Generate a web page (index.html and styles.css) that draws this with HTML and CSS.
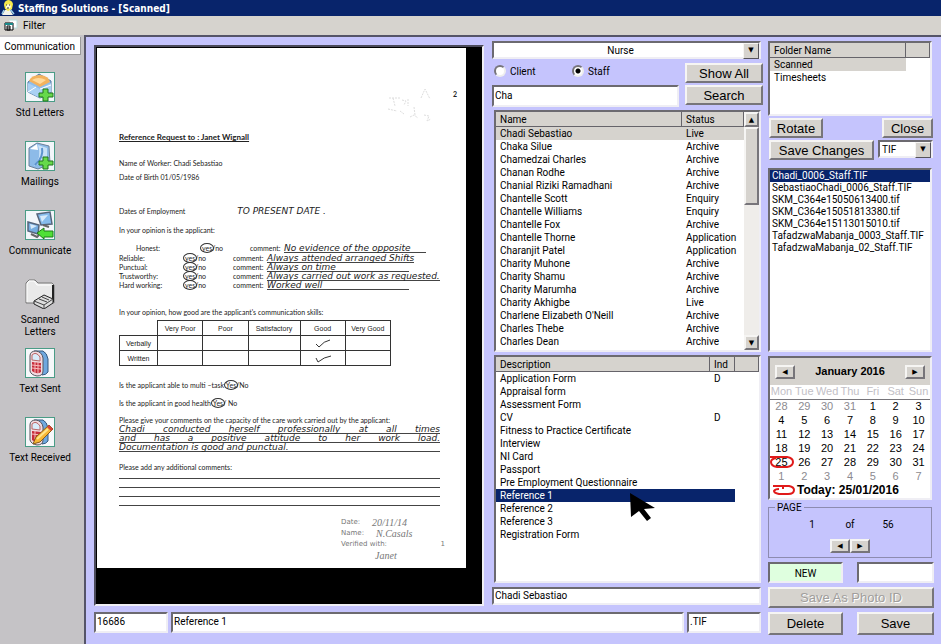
FILE: index.html
```html
<!DOCTYPE html>
<html lang="en">

<head>
    <meta charset="UTF-8">
    <meta name="viewport" content="width=device-width, initial-scale=1.0">
    <title>Staffing Solutions - [Scanned]</title>
    <link rel="stylesheet" href="styles.css">
</head>

<body>
    <header class="titlebar">
        <svg class="title-icon" viewBox="0 0 16 16" aria-hidden="true">
            <path d="M2 15l3-5h5l3 5z" fill="#f4f4ea" />
            <path d="M10 9l4 5M4 10l-2 4" stroke="#9fd0e8" stroke-width="1.5" />
            <path d="M4 5q0-4 4-5 4 0 5 4l-1 5-4 2-3-2z" fill="#f6e84a" />
            <path d="M6 5l4-1 1 3-2 2-3-1z" fill="#fffbd8" />
            <path d="M6 5h1M9 5h1M7 8h2" stroke="#333" />
        </svg>
        <span>Staffing Solutions - [Scanned]</span>
    </header>
    <nav class="menubar">
        <svg class="menu-icon" viewBox="0 0 14 14" aria-hidden="true">
            <path d="M5 1h8v8h-4" fill="#fff" stroke="#b9dede" />
            <path d="M1 4h8v7H1z" fill="#fff" stroke="#000" />
            <path d="M1 4h8v2H1z" fill="#1b8a8a" />
            <path d="M3 7h3v4H3zM3 9h3" fill="none" stroke="#000" />
        </svg>
        <a href="#filter">Filter</a>
    </nav>

    <div class="workspace">
        <aside class="sidebar">
            <h2 class="sidebar-tab">Communication</h2>
            <nav class="shortcuts">
                <a class="shortcut" href="#std-letters">
                    <svg viewBox="0 0 30 30" aria-hidden="true">
                        <rect x=".5" y=".5" width="29" height="29" fill="#f2f6fa" stroke="#4a9c86" />
                        <path d="M3 10L14 2l12 7v12l-11 5L3 20z" fill="#8fbdea" stroke="#52779f" />
                        <path d="M4 9q2-6 11-6 9 1 10 7l-10 5z" fill="#f3b25d" />
                        <path d="M7 8q6-4 14 0l-6 4z" fill="#ffd99a" />
                        <path d="M3 11l12 6 11-6v9l-11 6-12-6z" fill="#a9d0f3" />
                        <path d="M3 20l8-5M26 13l-11 4" stroke="#fff" fill="none" />
                        <path d="M18 17h5v4h5v4h-5v4h-5v-4h-4v-4h4z" fill="#66d94b" stroke="#20751d" />
                    </svg>
                    <span>Std Letters</span>
                </a>
                <a class="shortcut" href="#mailings">
                    <svg viewBox="0 0 30 30" aria-hidden="true">
                        <rect x=".5" y=".5" width="29" height="29" fill="#f2f6fa" stroke="#4a9c86" />
                        <path d="M4 7l8-5 12 3 1 18-12 5-9-3z" fill="#8dbbe8" stroke="#6b8098" />
                        <path d="M5 8l7-5 1 6z" fill="#fff" />
                        <path d="M13 4l9 3v12L9 25q8-8 4-21" fill="#c9e2f8" />
                        <path d="M17 7q2 9-7 17" stroke="#5c93ce" fill="none" stroke-width="2" />
                        <path d="M18 16h5v4h5v4h-5v4h-5v-4h-4v-4h4z" fill="#66d94b" stroke="#20751d" />
                    </svg>
                    <span>Mailings</span>
                </a>
                <a class="shortcut" href="#communicate">
                    <svg viewBox="0 0 30 30" aria-hidden="true">
                        <rect x=".5" y=".5" width="29" height="29" fill="#f2f6fa" stroke="#4a9c86" />
                        <path d="M12 4l13-2 2 12-11 1z" fill="#86bcec" stroke="#56657b" stroke-width="1.5" />
                        <path d="M3 12l11 3-1 9-10-3z" fill="#75ade0" stroke="#56657b" stroke-width="1.5" />
                        <path d="M15 6l8-1-6 7zM5 14l7 2-6 3z" fill="#d7ebfb" />
                        <path d="M18 15l6 2M6 24l6 3 2-2" stroke="#666" stroke-width="2" fill="none" />
                        <path d="M12 23l7-5v3h9v6h-9v2z" fill="#4fe036" stroke="#1d7a18" />
                    </svg>
                    <span>Communicate</span>
                </a>
                <a class="shortcut" href="#scanned-letters">
                    <svg viewBox="0 0 30 30" aria-hidden="true">
                        <path d="M1 24V4l3-3h6l3 3h14l2 2v18z" fill="#e9e9e9" stroke="#777" />
                        <path d="M2 23V5l2-3h5l3 4h14" stroke="#fff" fill="none" />
                        <path d="M28 6v17" stroke="#222" stroke-width="2" />
                        <path d="M9 22l10-6 9 4v4l-9 6-10-5z" fill="#ddd" stroke="#222" />
                        <path d="M9 22l10 4 9-6M19 26v4M14 20l8 3M17 18l7 3" stroke="#444" fill="none" />
                    </svg>
                    <span>Scanned Letters</span>
                </a>
                <a class="shortcut" href="#text-sent">
                    <svg viewBox="0 0 30 30" aria-hidden="true">
                        <rect x=".5" y=".5" width="29" height="29" fill="#f6f8fa" stroke="#4a9c86" />
                        <path d="M9 3h9q4 2 5 8v13q-2 3-6 3z" fill="#6fa8de" stroke="#35587f" />
                        <path d="M5 8q0-5 6-5 6 1 7 7v13q0 5-6 5-6-1-7-5z" fill="#f1dbe0" stroke="#54565f" />
                        <path d="M7 7q4-4 8 2v4l-8-1z" fill="#d9edfb" stroke="#b66" />
                        <path d="M7 14l9 1v9q-4 3-9-1z" fill="#c72d3c" />
                        <path d="M7 17l9 1M7 20l9 1M10 14v11M13 14v11" stroke="#f7bcbc" />
                    </svg>
                    <span>Text Sent</span>
                </a>
                <a class="shortcut" href="#text-received">
                    <svg viewBox="0 0 30 30" aria-hidden="true">
                        <rect x=".5" y=".5" width="29" height="29" fill="#f6f8fa" stroke="#4a9c86" />
                        <path d="M9 3h9q4 2 5 8v13q-2 3-6 3z" fill="#6fa8de" stroke="#35587f" />
                        <path d="M5 8q0-5 6-5 6 1 7 7v13q0 5-6 5-6-1-7-5z" fill="#f1dbe0" stroke="#54565f" />
                        <path d="M7 7q4-4 8 2v4l-8-1z" fill="#d9edfb" stroke="#b66" />
                        <path d="M7 14l9 1v9q-4 3-9-1z" fill="#c72d3c" />
                        <path d="M7 17l9 1M10 14v8" stroke="#f7bcbc" />
                        <path d="M8 27l3-7L24 8l4 4-13 13z" fill="#f7b836" stroke="#8a5a17" />
                        <path d="M22 10l2-2 4 4-2 2z" fill="#d3413a" />
                        <path d="M12 22l11-10" stroke="#ffe58c" stroke-width="2" />
                    </svg>
                    <span>Text Received</span>
                </a>
            </nav>
        </aside>

        <main class="main">
            <div class="browse">
                <div class="browse-top">
                    <section class="viewer" aria-label="Scanned document">
                        <article class="page">
                            <svg class="smudge" viewBox="0 0 60 44" aria-hidden="true">
                                <path d="M9 14h12M13 14l2 8M22 16l4 1-2 4M28 15v7M41 14l4-9 5 10M8 25l9 2M20 27l4 3M34 23l1 8M30 33l4-2 4 3M44 31l5 1-2 5 4-2" />
                            </svg>
                            <p class="page-mark">2</p>
                            <h1 class="doc-title">Reference Request to : Janet Wignall</h1>
                            <p class="doc-worker">Name of Worker: Chadi Sebastiao</p>
                            <p class="doc-birth">Date of Birth 01/05/1986</p>
                            <p class="doc-dates"><span>Dates of Employment</span><span class="hand">TO PRESENT DATE .</span></p>
                            <p class="doc-opinion">In your opinion is the applicant:</p>
                            <div class="traits">
                                <div class="trait trait-first">
                                    <span>Honest:</span><span><span class="ring">yes</span>/no</span><span>comment:</span>
                                    <span class="hand answer long">No evidence of the opposite</span>
                                </div>
                                <div class="trait">
                                    <span>Reliable:</span><span><span class="ring">yes</span>/no</span><span>comment:</span>
                                    <span class="hand answer long">Always attended arranged Shifts</span>
                                </div>
                                <div class="trait">
                                    <span>Punctual:</span><span><span class="ring">yes</span>/no</span><span>comment:</span>
                                    <span class="hand answer">Always on time</span>
                                </div>
                                <div class="trait">
                                    <span>Trustworthy:</span><span><span class="ring">yes</span>/no</span><span>comment:</span>
                                    <span class="hand answer long">Always carried out work as requested.</span>
                                </div>
                                <div class="trait">
                                    <span>Hard working:</span><span><span class="ring">yes</span>/no</span><span>comment:</span>
                                    <span class="hand answer">Worked well</span>
                                </div>
                            </div>
                            <p class="doc-skills">In your opinion, how good are the applicant's communication skills:</p>
                            <table class="skills">
                                <tr>
                                    <td class="blank"></td>
                                    <th>Very Poor</th>
                                    <th>Poor</th>
                                    <th>Satisfactory</th>
                                    <th>Good</th>
                                    <th>Very Good</th>
                                </tr>
                                <tr>
                                    <th>Verbally</th>
                                    <td></td>
                                    <td></td>
                                    <td></td>
                                    <td><svg class="tick" viewBox="0 0 18 9" aria-label="ticked"><path d="M2 5l3 3q5-6 11-7" /></svg></td>
                                    <td></td>
                                </tr>
                                <tr>
                                    <th>Written</th>
                                    <td></td>
                                    <td></td>
                                    <td></td>
                                    <td><svg class="tick" viewBox="0 0 18 9" aria-label="ticked"><path d="M2 4l2 4q6-5 13-6" /></svg></td>
                                    <td></td>
                                </tr>
                            </table>
                            <p class="doc-task">Is the applicant able to multi –task <span class="ring">Yes</span>/No</p>
                            <p class="doc-health">Is the applicant in good health <span class="ring">Yes</span>/ No</p>
                            <p class="doc-comments">Please give your comments on the capacity of the care work carried out by the applicant:</p>
                            <div class="written">
                                <p class="hand full">Chadi conducted herself professionally at all times</p>
                                <p class="hand full">and has a positive attitude to her work load.</p>
                                <p class="hand"><span>Documentation is good and punctual.</span></p>
                            </div>
                            <p class="doc-extra">Please add any additional comments:</p>
                            <div class="ruled"><i></i><i></i><i></i><i></i></div>
                            <div class="signoff">
                                <p><span>Date:</span><span class="sign">20/11/14</span></p>
                                <p><span>Name:</span><span class="sign">N.Casals</span></p>
                                <p><span>Verified with:</span><span class="page-no">1</span></p>
                                <p class="sign last">Janet</p>
                            </div>
                        </article>
                    </section>

                    <section class="people">
                        <div class="combo combo-wide">
                            <select aria-label="Staff type">
                                <option>Nurse</option>
                            </select>
                        </div>
                        <div class="finder">
                            <div class="kinds">
                                <label><input type="radio" name="kind"> Client</label>
                                <label><input type="radio" name="kind" checked> Staff</label>
                            </div>
                            <button type="button" class="btn">Show All</button>
                            <input type="text" class="field" value="Cha" aria-label="Search name">
                            <button type="button" class="btn">Search</button>
                        </div>
                        <div class="list names">
                            <div class="list-body">
                                <table class="grid">
                                    <colgroup><col><col class="col-status"></colgroup>
                                    <thead>
                                        <tr><th>Name</th><th>Status</th></tr>
                                    </thead>
                                    <tbody>
                                        <tr class="current"><td>Chadi Sebastiao</td><td>Live</td></tr>
                                        <tr><td>Chaka Silue</td><td>Archive</td></tr>
                                        <tr><td>Chamedzai Charles</td><td>Archive</td></tr>
                                        <tr><td>Chanan Rodhe</td><td>Archive</td></tr>
                                        <tr><td>Chanial Riziki Ramadhani</td><td>Archive</td></tr>
                                        <tr><td>Chantelle Scott</td><td>Enquiry</td></tr>
                                        <tr><td>Chantelle Williams</td><td>Enquiry</td></tr>
                                        <tr><td>Chantelle Fox</td><td>Archive</td></tr>
                                        <tr><td>Chantelle Thorne</td><td>Application</td></tr>
                                        <tr><td>Charanjit Patel</td><td>Application</td></tr>
                                        <tr><td>Charity Muhone</td><td>Archive</td></tr>
                                        <tr><td>Charity Shamu</td><td>Archive</td></tr>
                                        <tr><td>Charity Marumha</td><td>Archive</td></tr>
                                        <tr><td>Charity Akhigbe</td><td>Live</td></tr>
                                        <tr><td>Charlene Elizabeth O'Neill</td><td>Archive</td></tr>
                                        <tr><td>Charles Thebe</td><td>Archive</td></tr>
                                        <tr><td>Charles Dean</td><td>Archive</td></tr>
                                        <tr><td>Charles Gibbs</td><td>Archive</td></tr>
                                    </tbody>
                                </table>
                            </div>
                            <div class="scrollbar">
                                <button type="button" class="mini" aria-label="Scroll up">▲</button>
                                <div class="thumb"></div>
                                <button type="button" class="mini" aria-label="Scroll down">▼</button>
                            </div>
                        </div>
                        <div class="list files">
                            <table class="grid">
                                <colgroup><col><col class="col-ind"><col class="col-rest"></colgroup>
                                <thead>
                                    <tr><th>Description</th><th>Ind</th><th></th></tr>
                                </thead>
                                <tbody>
                                    <tr><td>Application Form</td><td>D</td></tr>
                                    <tr><td>Appraisal form</td><td></td></tr>
                                    <tr><td>Assessment Form</td><td></td></tr>
                                    <tr><td>CV</td><td>D</td></tr>
                                    <tr><td>Fitness to Practice Certificate</td><td></td></tr>
                                    <tr><td>Interview</td><td></td></tr>
                                    <tr><td>NI Card</td><td></td></tr>
                                    <tr><td>Passport</td><td></td></tr>
                                    <tr><td>Pre Employment Questionnaire</td><td></td></tr>
                                    <tr class="selected"><td>Reference 1</td><td></td></tr>
                                    <tr><td>Reference 2</td><td></td></tr>
                                    <tr><td>Reference 3</td><td></td></tr>
                                    <tr><td>Registration Form</td><td></td></tr>
                                </tbody>
                            </table>
                            <svg class="pointer" viewBox="0 0 26 28" aria-hidden="true">
                                <path d="M0 0l25 15-11 1 7 9-4 3-8-10-8 6z" />
                            </svg>
                        </div>
                        <input type="text" class="field field-name" value="Chadi Sebastiao" aria-label="Selected name">
                    </section>
                </div>
                <div class="record">
                    <input type="text" class="field" value="16686" aria-label="Record number">
                    <input type="text" class="field" value="Reference 1" aria-label="Description">
                    <input type="text" class="field" value=".TIF" aria-label="File type">
                </div>
            </div>

            <section class="tools">
                <div class="list folders">
                    <table class="grid">
                        <colgroup><col><col class="col-rest"></colgroup>
                        <thead>
                            <tr><th>Folder Name</th><th></th></tr>
                        </thead>
                        <tbody>
                            <tr class="current"><td>Scanned</td></tr>
                            <tr><td>Timesheets</td></tr>
                        </tbody>
                    </table>
                </div>
                <div class="row">
                    <button type="button" class="btn btn-rotate">Rotate</button>
                    <button type="button" class="btn btn-close">Close</button>
                </div>
                <div class="row">
                    <button type="button" class="btn btn-changes">Save Changes</button>
                    <div class="combo combo-type">
                        <select aria-label="Save type">
                            <option>TIF</option>
                        </select>
                    </div>
                </div>
                <ul class="list scans">
                    <li class="selected">Chadi_0006_Staff.TIF</li>
                    <li>SebastiaoChadi_0006_Staff.TIF</li>
                    <li>SKM_C364e15050613400.tif</li>
                    <li>SKM_C364e15051813380.tif</li>
                    <li>SKM_C364e15113015010.tif</li>
                    <li>TafadzwaMabanja_0003_Staff.TIF</li>
                    <li>TafadzwaMabanja_02_Staff.TIF</li>
                </ul>
                <div class="list calendar">
                    <div class="month">
                        <button type="button" class="mini" aria-label="Previous month">◀</button>
                        <strong>January 2016</strong>
                        <button type="button" class="mini" aria-label="Next month">▶</button>
                    </div>
                    <table class="days">
                        <thead>
                            <tr><th>Mon</th><th>Tue</th><th>Wed</th><th>Thu</th><th>Fri</th><th>Sat</th><th>Sun</th></tr>
                        </thead>
                        <tbody>
                            <tr><td class="off">28</td><td class="off">29</td><td class="off">30</td><td class="off">31</td><td>1</td><td>2</td><td>3</td></tr>
                            <tr><td>4</td><td>5</td><td>6</td><td>7</td><td>8</td><td>9</td><td>10</td></tr>
                            <tr><td>11</td><td>12</td><td>13</td><td>14</td><td>15</td><td>16</td><td>17</td></tr>
                            <tr><td>18</td><td>19</td><td>20</td><td>21</td><td>22</td><td>23</td><td>24</td></tr>
                            <tr>
                                <td class="today">25<svg class="loop" viewBox="0 0 24 14" aria-hidden="true"><path d="M0 2h17q6 1 6 5t-6 5H7q-6-1-6-5 0-3 5-4" /></svg></td>
                                <td>26</td><td>27</td><td>28</td><td>29</td><td>30</td><td>31</td>
                            </tr>
                            <tr><td class="off">1</td><td class="off">2</td><td class="off">3</td><td class="off">4</td><td class="off">5</td><td class="off">6</td><td class="off">7</td></tr>
                        </tbody>
                    </table>
                    <p class="today-line">
                        <svg viewBox="0 0 24 14" aria-hidden="true"><path d="M1 3h10v3M11 3h6q5 1 5 4 0 4-6 4H7q-5-1-5-3 1-2 5-2" /></svg>
                        <strong>Today: 25/01/2016</strong>
                    </p>
                </div>
                <fieldset class="pager">
                    <legend>PAGE</legend>
                    <p><span>1</span><span>of</span><span>56</span></p>
                    <div class="pager-buttons">
                        <button type="button" class="mini" aria-label="Previous page">◀</button>
                        <button type="button" class="mini" aria-label="Next page">▶</button>
                    </div>
                </fieldset>
                <div class="pair">
                    <input type="text" class="field field-new" value="NEW" aria-label="Record state">
                    <input type="text" class="field" aria-label="Note">
                </div>
                <button type="button" class="btn btn-photo" disabled>Save As Photo ID</button>
                <div class="pair pair-last">
                    <button type="button" class="btn">Delete</button>
                    <button type="button" class="btn">Save</button>
                </div>
            </section>
        </main>
    </div>
</body>

</html>
```

FILE: styles.css
```css
* {
    box-sizing: border-box;
}

body {
    margin: 0;
    min-height: 100vh;
    display: flex;
    flex-direction: column;
    background-color: #c5c4fd;
    color: #000;
    font-family: Roboto, "Liberation Sans", Arial, sans-serif;
    font-size: 10px;
    line-height: 13px;
}

button,
input,
select {
    font: inherit;
    color: inherit;
}

p,
h1,
h2,
ul {
    margin: 0;
    padding: 0;
}

a {
    color: inherit;
    text-decoration: none;
}

/* Title and menu */
.titlebar {
    display: flex;
    align-items: center;
    gap: 2px;
    height: 16px;
    background-color: #08246b;
    color: #fff;
    font-family: "DejaVu Sans Condensed", "DejaVu Sans", sans-serif;
    font-size: 10px;
    font-weight: bold;
}

.title-icon {
    width: 16px;
    height: 16px;
}

.menubar {
    display: flex;
    align-items: center;
    gap: 5px;
    height: 19px;
    padding-left: 4px;
    background-color: #d6d3ce;
}

.menu-icon {
    width: 14px;
    height: 14px;
}

.workspace {
    flex: 1;
    display: flex;
}

/* Sidebar */
.sidebar {
    width: 84px;
    flex-shrink: 0;
    background-color: #c5c3c6;
}

.sidebar-tab {
    margin: 2px 3px 0 0;
    padding: 3px 5px 2px 0;
    height: 18px;
    background-color: #fff;
    border-right: 1px solid #999;
    border-bottom: 1px solid #999;
    font-size: 10px;
    font-weight: normal;
    text-align: right;
}

.shortcuts {
    display: grid;
    grid-auto-rows: 69px;
    padding: 17px 9px 0 5px;
}

.shortcut {
    display: flex;
    flex-direction: column;
    align-items: center;
    gap: 5px;
    line-height: 12px;
    text-align: center;
}

.shortcut svg {
    width: 30px;
    height: 30px;
    flex-shrink: 0;
}

.shortcut span {
    max-width: 70px;
}

.shortcut:nth-child(4) span {
    max-width: 50px;
}

/* Main area */
.main {
    flex: 1;
    min-width: 0;
    display: flex;
    gap: 5px;
    padding: 4px 7px 9px 8px;
    border-top: 2px solid #555468;
    border-left: 2px solid #555468;
}

.browse {
    flex: 1;
    min-width: 0;
    display: flex;
    flex-direction: column;
    gap: 6px;
    padding-bottom: 2px;
}

.browse-top {
    flex: 1;
    display: flex;
    gap: 8px;
}

.field,
.list,
.combo {
    background-color: #fff;
    border: 2px solid;
    border-color: #6c6a70 #efeef4 #efeef4 #6c6a70;
}

.field {
    width: 100%;
    min-width: 0;
    height: 21px;
    padding: 0 1px 2px;
    border-radius: 0;
}

.btn,
.mini {
    padding: 0;
    background-color: #d6d3ce;
    border: 2px solid;
    border-color: #f6f5f3 #77757a #77757a #f6f5f3;
    border-radius: 0;
}

.btn {
    height: 20px;
    font-family: "Liberation Sans", Arial, sans-serif;
    font-size: 13px;
}

.btn:active,
.mini:active {
    border-color: #77757a #f6f5f3 #f6f5f3 #77757a;
}

.btn:disabled {
    color: #a09e9c;
    text-shadow: 1px 1px 0 #fff;
}

.mini {
    width: 20px;
    height: 14px;
    font-family: "DejaVu Sans", sans-serif;
    font-size: 7px;
    line-height: 8px;
}

/* Scanned document */
.viewer {
    flex: 1;
    min-width: 0;
    margin-top: 4px;
    padding: 1px 16px 36px 1px;
    background-color: #000;
    border: 2px solid;
    border-color: #4c4b5c #efeef4 #efeef4 #4c4b5c;
}

.page {
    position: relative;
    min-height: 520px;
    padding: 42px 9px 6px 22px;
    background-color: #fff;
    color: #222;
    font-family: Lato, "Open Sans", sans-serif;
    font-size: 7px;
    line-height: 9px;
}

.smudge {
    position: absolute;
    top: 36px;
    right: 26px;
    width: 60px;
    height: 44px;
    fill: none;
    stroke: #ddd;
    stroke-dasharray: 2 1;
}

.page-mark {
    text-align: right;
    font-weight: bold;
}

.hand {
    font-family: "DejaVu Sans", sans-serif;
    font-style: italic;
    font-size: 9px;
}

.doc-title {
    margin-top: 34px;
    font-size: 8px;
    font-weight: bold;
    text-decoration: underline;
}

.doc-worker {
    margin-top: 17px;
}

.doc-birth {
    margin-top: 5px;
}

.doc-dates {
    display: flex;
    gap: 52px;
    margin-top: 25px;
}

.doc-opinion {
    margin-top: 10px;
}

.traits {
    margin-top: 9px;
}

.trait {
    display: grid;
    grid-template-columns: 66px 48px 34px 142px;
    height: 9px;
    white-space: nowrap;
}

.trait-first {
    height: 10px;
    padding-left: 17px;
}

.answer {
    height: 9px;
    border-bottom: 1px solid #444;
    line-height: 9px;
}

.trait .long {
    min-width: max-content;
}

.ring {
    margin: 0 -2px;
    padding: 0 1px;
    border: 1px solid #333;
    border-radius: 50%;
}

.doc-skills {
    margin-top: 18px;
}

.skills {
    width: 272px;
    margin-top: 3px;
    border-collapse: collapse;
    table-layout: fixed;
    font-family: "Liberation Sans", Arial, sans-serif;
}

.skills th,
.skills td {
    height: 15px;
    padding: 0;
    border: 1px solid #333;
    font-weight: normal;
    line-height: 9px;
}

.skills .blank {
    width: 38px;
    border-top: 0;
    border-left: 0;
}

.skills th:nth-child(4) {
    width: 52px;
}

.tick {
    display: block;
    width: 18px;
    height: 9px;
    margin: 0 auto;
    fill: none;
    stroke: #333;
}

.doc-task {
    margin-top: 15px;
}

.doc-health {
    margin-top: 9px;
}

.doc-comments {
    margin-top: 8px;
}

.written p {
    width: 321px;
    height: 9px;
    border-bottom: 1px solid #444;
    line-height: 9px;
    white-space: nowrap;
}

.written .full {
    text-align-last: justify;
}

.doc-extra {
    margin-top: 11px;
}

.ruled {
    margin-top: 6px;
}

.ruled i {
    display: block;
    width: 321px;
    height: 9px;
    border-top: 1px solid #444;
}

.signoff {
    width: 104px;
    margin: 3px 0 0 222px;
    color: #777;
    font-family: "DejaVu Sans", sans-serif;
    line-height: 11px;
}

.signoff p {
    display: flex;
    gap: 12px;
    height: 11px;
}

.sign {
    font-family: "Liberation Serif", serif;
    font-style: italic;
    font-size: 10px;
}

.page-no {
    margin-left: auto;
}

.signoff .last {
    padding-left: 34px;
}

/* Lists */
.grid {
    width: 100%;
    border-collapse: separate;
    border-spacing: 0;
    table-layout: fixed;
}

.grid th {
    height: 15px;
    padding: 0 4px;
    background-color: #d6d3ce;
    border-right: 1px solid #66646a;
    border-bottom: 1px solid #66646a;
    font-weight: normal;
    text-align: left;
}

.grid td {
    height: 13px;
    padding: 0 4px;
    white-space: nowrap;
}

.current td {
    background-color: #d6d3ce;
}

.selected,
.selected td {
    background-color: #08246b;
    color: #fff;
}

.list {
    position: relative;
}

/* People column */
.people {
    width: 271px;
    flex-shrink: 0;
    display: flex;
    flex-direction: column;
    padding-bottom: 1px;
}

.combo {
    position: relative;
    height: 18px;
}

.combo::after {
    content: "▼";
    position: absolute;
    top: 0;
    right: 0;
    width: 14px;
    height: 14px;
    background-color: #d6d3ce;
    border: 1px solid;
    border-color: #f6f5f3 #55535a #55535a #f6f5f3;
    font-family: "DejaVu Sans", sans-serif;
    font-size: 7px;
    line-height: 12px;
    text-align: center;
    pointer-events: none;
}

.combo select {
    display: block;
    width: 100%;
    height: 14px;
    padding: 0 14px 0 2px;
    appearance: none;
    background: none;
    border: 0;
}

.combo-wide {
    margin-right: 2px;
}

.combo-wide select {
    text-align-last: center;
}

.finder {
    display: grid;
    grid-template-columns: 1fr 78px;
    gap: 2px 6px;
    margin: 4px 0 3px;
}

.finder .field {
    height: 22px;
}

.kinds {
    display: grid;
    grid-template-columns: 78px 1fr;
    align-items: start;
    padding: 1px 0 0 2px;
}

.kinds label {
    display: flex;
    align-items: center;
    gap: 4px;
    height: 14px;
}

.kinds input {
    appearance: none;
    width: 12px;
    height: 12px;
    margin: 0;
    background-color: #fff;
    border: 2px solid;
    border-color: #77757a #eee #eee #77757a;
    border-radius: 50%;
}

.kinds input:checked {
    background-image: radial-gradient(circle, #000 2px, #fff 3px);
}

.names {
    display: flex;
    height: 242px;
    margin: 0 2px 3px;
}

.list-body {
    flex: 1;
    overflow: hidden;
}

.col-status {
    width: 62px;
}

.scrollbar {
    width: 15px;
    display: flex;
    flex-direction: column;
    background-color: #efedea;
}

.scrollbar .mini {
    width: 15px;
    height: 15px;
}

.scrollbar .mini:last-child {
    margin-top: auto;
}

.thumb {
    height: 78px;
    background-color: #d6d3ce;
    border: 2px solid;
    border-color: #f6f5f3 #77757a #77757a #f6f5f3;
}

.files {
    flex: 1;
    margin: 0 2px 4px;
}

.col-ind {
    width: 25px;
}

.col-rest {
    width: 24px;
}

.pointer {
    position: absolute;
    top: 136px;
    left: 134px;
    width: 26px;
    height: 28px;
}

.people .field-name {
    width: 269px;
    height: 18px;
}

.record {
    display: grid;
    grid-template-columns: 74px 1fr 74px;
    gap: 3px;
    padding-right: 2px;
}

/* Tools column */
.tools {
    width: 166px;
    flex-shrink: 0;
    display: flex;
    flex-direction: column;
}

.folders {
    height: 75px;
    margin-right: 2px;
}

.row {
    display: flex;
    justify-content: space-between;
    margin-top: 2px;
    padding: 0 1px;
}

.btn-rotate {
    width: 54px;
}

.btn-close {
    width: 51px;
}

.btn-changes {
    width: 105px;
}

.combo-type {
    width: 55px;
}

.scans {
    flex: 1;
    margin: 8px 2px 4px 0;
    list-style: none;
    line-height: 12px;
}

.scans li {
    padding-left: 2px;
    height: 12px;
}

.calendar {
    height: 144px;
    margin: 0 2px 0 0;
    font-family: "Liberation Sans", Arial, sans-serif;
    font-size: 11px;
}

.month {
    display: flex;
    align-items: center;
    justify-content: space-between;
    height: 27px;
    padding: 0 5px;
    background-color: #d6d3ce;
}

.days {
    width: 100%;
    border-collapse: collapse;
    table-layout: fixed;
    text-align: center;
}

.days th {
    height: 14px;
    padding: 0;
    border-bottom: 1px solid #77757a;
    color: #c2c0c6;
    font-weight: normal;
}

.days td {
    height: 14px;
    padding: 0;
}

.days .off {
    color: #8c8a90;
}

.days .today {
    position: relative;
}

.loop {
    position: absolute;
    top: 0;
    left: 0;
}

.loop,
.today-line svg {
    width: 24px;
    height: 14px;
    fill: none;
    stroke: #e01a1a;
    stroke-width: 2;
}

.today-line {
    display: flex;
    align-items: center;
    gap: 1px;
    padding-left: 2px;
    font-size: 12px;
}

.pager {
    min-width: 0;
    height: 57px;
    margin: 1px 2px 4px 0;
    padding: 0;
    border: 1px solid #8d8bb0;
}

.pager legend {
    margin-left: 6px;
    padding: 0 2px;
}

.pager p {
    display: grid;
    grid-template-columns: repeat(3, 38px);
    justify-content: center;
    margin-top: 4px;
    text-align: center;
}

.pager-buttons {
    display: flex;
    justify-content: center;
    margin-top: 8px;
}

.pair {
    display: grid;
    grid-template-columns: 75px 77px;
    justify-content: space-between;
}

.field-new {
    padding: 2px 1px 0;
    background-color: #dfffdf;
    text-align: center;
}

.btn-photo {
    height: 21px;
    margin: 4px 0;
}

.pair-last .btn {
    height: 23px;
}
```
